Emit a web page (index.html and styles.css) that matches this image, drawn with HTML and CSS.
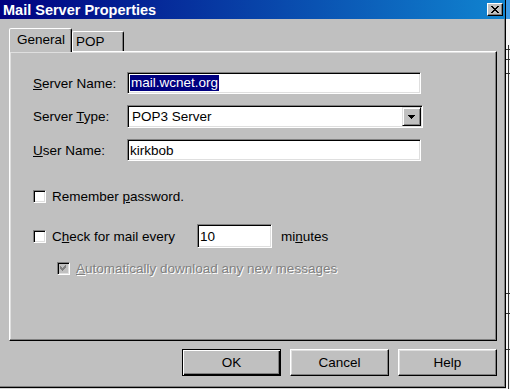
FILE: index.html
```html
<!DOCTYPE html>
<html lang="en">
<head>
    <meta charset="UTF-8">
    <title>Mail Server Properties</title>
    <link rel="stylesheet" href="styles.css">
</head>
<body>
    <div class="dialog">
        <div class="titlebar">
            <span class="title">Mail Server Properties</span>
            <span class="close-btn">
                <svg width="8" height="7" viewBox="0 0 8 7" shape-rendering="crispEdges">
                    <path d="M0 0h2v1h1v1h2v-1h1v-1h2v1h-1v1h-1v1h-1v1h1v1h1v1h1v1h-2v-1h-1v-1h-2v1h-1v1h-2v-1h1v-1h1v-1h1v-1h-1v-1h-1v-1h-1z" fill="#000"/>
                </svg>
            </span>
        </div>

        <div class="tabs">
            <div class="tab tab-active">General</div>
            <div class="tab">POP</div>
        </div>

        <div class="panel">
            <div class="fields">
                <div class="field-row">
                    <span class="field-label"><u>S</u>erver Name:</span>
                    <div class="textbox"><span class="selected">mail.wcnet.org</span></div>
                </div>
                <div class="field-row">
                    <span class="field-label">Server <u>T</u>ype:</span>
                    <div class="combo">
                        <span class="combo-value">POP3 Server</span>
                        <span class="combo-btn">
                            <svg width="7" height="4" viewBox="0 0 7 4" shape-rendering="crispEdges">
                                <path d="M0 0h7v1h-1v1h-1v1h-1v1h-1v-1h-1v-1h-1v-1h-1z" fill="#000"/>
                            </svg>
                        </span>
                    </div>
                </div>
                <div class="field-row">
                    <span class="field-label"><u>U</u>ser Name:</span>
                    <div class="textbox">kirkbob</div>
                </div>
            </div>

            <div class="option-row option-first">
                <span class="checkbox"></span>
                <span class="option-text">Remember <u>p</u>assword.</span>
            </div>
            <div class="option-row option-check">
                <span class="checkbox"></span>
                <span class="option-text option-fixed">C<u>h</u>eck for mail every</span>
                <div class="textbox textbox-small">10</div>
                <span class="unit">mi<u>n</u>utes</span>
            </div>
            <div class="option-row option-sub disabled">
                <span class="checkbox checkbox-disabled">
                    <svg width="7" height="7" viewBox="0 0 7 7" shape-rendering="crispEdges">
                        <path d="M6 0v3h-1v1h-1v1h-1v1h-1v-1h-1v-1h-1v-3h1v1h1v1h1v-1h1v-1h1v-1z" fill="#808080"/>
                    </svg>
                </span>
                <span class="option-text"><u>A</u>utomatically download any new messages</span>
            </div>
        </div>

        <div class="button-row">
            <button class="btn btn-default">OK</button>
            <button class="btn">Cancel</button>
            <button class="btn">Help</button>
        </div>
    </div>
    <div class="backdrop"></div>
</body>
</html>
```

FILE: styles.css
```css
body {
    margin: 0;
    width: 510px;
    height: 389px;
    overflow: hidden;
    display: flex;
    align-items: flex-start;
    background: #d4d4d4;
    font-family: "Liberation Sans", Arial, sans-serif;
    font-size: 13.5px;
    color: #000;
}
.dialog {
    width: 505px;
    height: 387px;
    flex-shrink: 0;
    background: #c0c0c0;
    border-right: 1px solid #000;
    border-bottom: 1px solid #000;
    box-shadow: inset -1px -1px #808080;
}
.titlebar {
    height: 19px;
    display: flex;
    align-items: center;
    justify-content: space-between;
    padding: 0 2px 0 3px;
    background: linear-gradient(to right, #000080, #1084d0);
}
.title {
    color: #fff;
    font-weight: bold;
    font-size: 14.5px;
}
.close-btn {
    width: 16px;
    height: 13px;
    box-sizing: border-box;
    display: flex;
    align-items: center;
    justify-content: center;
    background: #c0c0c0;
    border: 1px solid;
    border-color: #fff #000 #000 #fff;
    box-shadow: inset -1px -1px #808080;
}
.tabs {
    display: flex;
    align-items: flex-end;
    height: 23px;
    margin: 9px 0 0 9px;
}
.tab {
    height: 20px;
    box-sizing: border-box;
    display: flex;
    align-items: center;
    padding: 0 0 1px 3px;
    border: 1px solid;
    border-bottom: none;
    border-color: #fff #000 transparent #fff;
    border-radius: 2px 2px 0 0;
    box-shadow: inset -1px 0 #808080;
    width: 52px;
}
.tab-active {
    position: relative;
    z-index: 1;
    width: 63px;
    height: 24px;
    margin-bottom: -1px;
    padding: 0 0 2px 7px;
    background: #c0c0c0;
}
.panel {
    width: 488px;
    height: 290px;
    box-sizing: border-box;
    margin-left: 9px;
    padding: 20px 0 0 23px;
    border: 1px solid;
    border-color: #fff #000 #000 #fff;
    box-shadow: inset -1px -1px #808080, inset 1px 1px #dfdfdf;
}
.fields {
    display: flex;
    flex-direction: column;
    gap: 11.5px;
}
.field-row {
    display: flex;
    align-items: center;
    height: 22px;
}
.field-label {
    width: 94px;
}
.textbox {
    width: 294px;
    height: 22px;
    box-sizing: border-box;
    display: flex;
    align-items: center;
    padding-left: 2px;
    background: #fff;
    border: 1px solid;
    border-color: #808080 #fff #fff #808080;
    box-shadow: inset 1px 1px #000, inset -1px -1px #dfdfdf;
}
.selected {
    background: #000080;
    color: #fff;
    line-height: 16px;
    padding: 0 1px;
}
.combo {
    width: 296px;
    height: 23px;
    box-sizing: border-box;
    display: flex;
    align-items: center;
    padding: 1px;
    background: #fff;
    border: 1px solid;
    border-color: #808080 #fff #fff #808080;
    box-shadow: inset 1px 1px #000, inset -1px -1px #dfdfdf;
}
.combo-value {
    flex: 1;
    padding-left: 3px;
}
.combo-btn {
    width: 19px;
    height: 19px;
    box-sizing: border-box;
    display: flex;
    align-items: center;
    justify-content: center;
    background: #c0c0c0;
    border: 1px solid;
    border-color: #dfdfdf #000 #000 #dfdfdf;
    box-shadow: inset 1px 1px #fff, inset -1px -1px #808080;
}
.option-row {
    display: flex;
    align-items: center;
    height: 22px;
}
.option-first {
    margin-top: 24px;
}
.option-check {
    height: 24px;
    margin-top: 17px;
}
.option-sub {
    margin-top: 9px;
    padding-left: 24px;
}
.checkbox {
    width: 13px;
    height: 13px;
    box-sizing: border-box;
    display: flex;
    align-items: center;
    justify-content: center;
    margin-right: 6px;
    background: #fff;
    border: 1px solid;
    border-color: #808080 #fff #fff #808080;
    box-shadow: inset 1px 1px #000, inset -1px -1px #dfdfdf;
}
.checkbox-disabled {
    background: #c0c0c0;
}
.option-fixed {
    width: 145px;
}
.textbox-small {
    width: 75px;
    height: 24px;
}
.unit {
    margin-left: 9px;
}
.disabled {
    color: #808080;
    text-shadow: 1px 1px #fff;
}
.button-row {
    display: flex;
    justify-content: flex-end;
    gap: 9px;
    margin-top: 8px;
    padding-right: 8px;
}
.btn {
    width: 99px;
    height: 27px;
    padding: 0;
    font-family: inherit;
    font-size: 13.5px;
    color: #000;
    background: #c0c0c0;
    border: 1px solid;
    border-color: #fff #000 #000 #fff;
    border-radius: 0;
    box-shadow: inset -1px -1px #808080, inset 1px 1px #dfdfdf;
}
.btn-default {
    border-color: #000;
    box-shadow: inset 1px 1px #fff, inset -1px -1px #000, inset -2px -2px #808080;
}
.backdrop {
    width: 4px;
    height: 389px;
    background:
        linear-gradient(#3f9be6, #3f9be6) 0 0 / 100% 19px no-repeat,
        linear-gradient(#333, #333) 2px 45px / 1px 344px no-repeat,
        linear-gradient(#333, #333) 0 49px / 100% 1px no-repeat,
        linear-gradient(#333, #333) 0 59px / 100% 1px no-repeat,
        linear-gradient(#333, #333) 0 73px / 100% 1px no-repeat,
        linear-gradient(#333, #333) 0 293px / 100% 1px no-repeat,
        linear-gradient(#333, #333) 0 313px / 100% 1px no-repeat,
        linear-gradient(#333, #333) 0 349px / 100% 1px no-repeat,
        #f4f4f4;
}
```
